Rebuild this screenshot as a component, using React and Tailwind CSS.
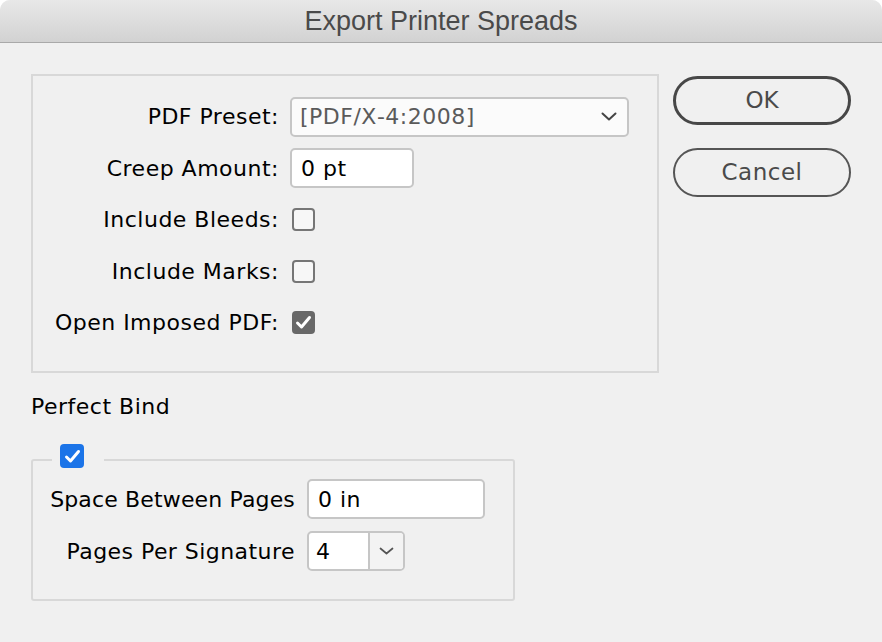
import React from "react";

const font = { fontFamily: '"DejaVu Sans", Verdana, sans-serif' };

function Chevron({ className }) {
  return (
    <svg className={className} width="16" height="9" viewBox="0 0 16 9" fill="none">
      <path d="M1.5 1.5 L8 7.5 L14.5 1.5" stroke="#444" strokeWidth="2" strokeLinecap="round" strokeLinejoin="round" />
    </svg>
  );
}

function Check({ className }) {
  return (
    <svg className={className} width="23" height="23" viewBox="0 0 23 23" fill="none">
      <path d="M5.5 12 L9.5 16 L17.5 6.5" stroke="#fff" strokeWidth="3" strokeLinecap="round" strokeLinejoin="round" />
    </svg>
  );
}

function Box({ checked }) {
  if (checked) {
    return (
      <div className="w-[23px] h-[23px] rounded-[4px] bg-[#686868] flex items-center justify-center">
        <Check />
      </div>
    );
  }
  return <div className="w-[23px] h-[23px] rounded-[4px] border-2 border-[#767676] bg-[#f7f7f7]" />;
}

function Row({ label, children }) {
  return (
    <div className="flex items-center h-[51.5px]">
      <div className="w-[246px] text-right text-[22px] tracking-[0.5px] text-black whitespace-nowrap">{label}</div>
      <div className="ml-[11px] flex items-center">{children}</div>
    </div>
  );
}

export default function App() {
  return (
    <div className="w-[882px] h-[642px] bg-white" style={font}>
      <div className="w-[882px] h-[642px] bg-[#f0f0f0] rounded-t-[10px] overflow-hidden flex flex-col">
        <div className="h-[43px] shrink-0 bg-gradient-to-b from-[#e8e8e8] to-[#d2d2d2] border-b border-[#a9a9a9] flex items-center justify-center">
          <span className="text-[27px] text-[#4a4a4a]" style={{ fontFamily: '"Liberation Sans", Arial, sans-serif' }}>
            Export Printer Spreads
          </span>
        </div>

        <div className="flex pl-[31px] pt-[31px]">
          <div className="w-[628px] h-[299px] border-2 border-[#d8d8d8] pt-[15px]">
            <Row label="PDF Preset:">
              <div className="w-[339px] h-[40px] rounded-[5px] border-2 border-[#c6c6c6] bg-[#fbfbfb] flex items-center justify-between pl-[8px] pr-[10px]">
                <span className="text-[22px] tracking-[0.5px] text-[#5a5a5a]">[PDF/X‑4:2008]</span>
                <Chevron />
              </div>
            </Row>
            <Row label="Creep Amount:">
              <div className="w-[124px] h-[40px] rounded-[5px] border-2 border-[#c6c6c6] bg-white flex items-center pl-[9px]">
                <span className="text-[22px] tracking-[0.5px] text-black">0 pt</span>
              </div>
            </Row>
            <Row label="Include Bleeds:">
              <div className="pl-[2px]"><Box /></div>
            </Row>
            <Row label="Include Marks:">
              <div className="pl-[2px]"><Box /></div>
            </Row>
            <Row label="Open Imposed PDF:">
              <div className="pl-[2px]"><Box checked /></div>
            </Row>
          </div>

          <div className="ml-[14px] mt-[2px] flex flex-col gap-[23px]">
            <button className="w-[178px] h-[49px] rounded-full border-[3.5px] border-[#474747] bg-[#f0f0f0] text-[23px] text-[#4a4a4a] flex items-center justify-center">
              OK
            </button>
            <button className="w-[178px] h-[49px] rounded-full border-2 border-[#555] bg-[#f0f0f0] text-[23px] tracking-[0.5px] text-[#4a4a4a] flex items-center justify-center">
              Cancel
            </button>
          </div>
        </div>

        <div className="pl-[31px] mt-[21px] text-[22px] tracking-[0.5px] leading-[26px] text-black">Perfect Bind</div>

        <div className="ml-[31px] mt-[39px] relative w-[484px] h-[142px] border-2 border-[#d8d8d8] rounded-[3px] pt-[18px] flex flex-col gap-[12px]">
          <div className="absolute left-[19px] top-[-17px] bg-[#f0f0f0] pl-[8px] pr-[20px] flex">
            <div className="w-[24px] h-[24px] rounded-[4px] bg-[#1b74e8] flex items-center justify-center">
              <Check />
            </div>
          </div>
          <div className="flex items-center h-[40px]">
            <div className="w-[262px] text-right text-[22px] tracking-[0.15px] text-black whitespace-nowrap">Space Between Pages</div>
            <div className="ml-[12px] w-[178px] h-[40px] rounded-[5px] border-2 border-[#c6c6c6] bg-white flex items-center pl-[9px]">
              <span className="text-[22px] tracking-[0.5px] text-black">0 in</span>
            </div>
          </div>
          <div className="flex items-center h-[40px]">
            <div className="w-[262px] text-right text-[22px] tracking-[0.45px] text-black whitespace-nowrap">Pages Per Signature</div>
            <div className="ml-[12px] w-[98px] h-[40px] rounded-[5px] border-2 border-[#c6c6c6] bg-white flex overflow-hidden">
              <div className="w-[61px] h-full flex items-center pl-[7px] border-r-2 border-[#c6c6c6]">
                <span className="text-[22px] text-black">4</span>
              </div>
              <div className="flex-1 bg-[#f3f3f3] flex items-center justify-center">
                <svg width="15" height="8" viewBox="0 0 15 8" fill="none">
                  <path d="M1.5 1.5 L7.5 6.5 L13.5 1.5" stroke="#555" strokeWidth="1.7" strokeLinecap="round" strokeLinejoin="round" />
                </svg>
              </div>
            </div>
          </div>
        </div>
      </div>
    </div>
  );
}
